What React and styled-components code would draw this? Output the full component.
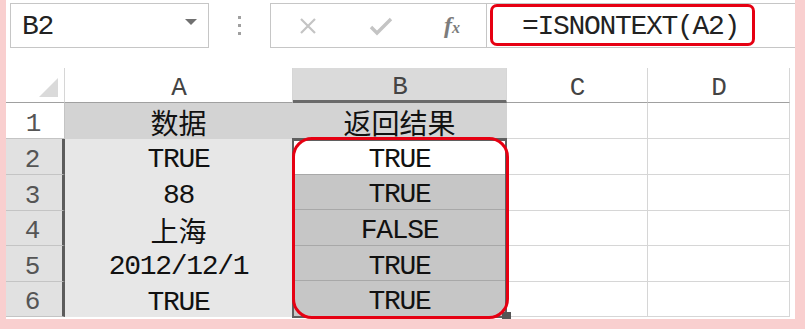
import React from 'react';
import styled, { createGlobalStyle } from 'styled-components';

const GlobalStyle = createGlobalStyle`
  html, body {
    margin: 0;
    padding: 0;
    background: #f9cfcf;
  }
  body {
    font-family: "Liberation Mono", "Noto Sans CJK SC", monospace;
  }
`;

const columns = ['A', 'B', 'C', 'D'];

const rows = [
  { n: 1, a: '数据', b: '返回结果', cjk: true },
  { n: 2, a: 'TRUE', b: 'TRUE' },
  { n: 3, a: '88', b: 'TRUE' },
  { n: 4, a: '上海', b: 'FALSE', cjkA: true },
  { n: 5, a: '2012/12/1', b: 'TRUE' },
  { n: 6, a: 'TRUE', b: 'TRUE' },
];

const App = () => {
  const [title, ...data] = rows;

  return (
    <>
      <GlobalStyle />
      <Window>
        <Toolbar>
          <NameBox>
            <MonoText>B2</MonoText>
            <svg width='12' height='7' viewBox='0 0 12 7'>
              <polygon points='0,0 12,0 6,6' fill='#707070' />
            </svg>
          </NameBox>
          <Grip>
            <Dot />
            <Dot />
            <Dot />
          </Grip>
          <ButtonBox>
            <svg width='18' height='18' viewBox='0 0 18 18'>
              <path d='M2 2 L16 16 M16 2 L2 16' stroke='#c4c4c4' strokeWidth='2.2' />
            </svg>
            <svg width='24' height='20' viewBox='0 0 24 20'>
              <path
                d='M2 11 L8 17 L22 3'
                stroke='#c4c4c4'
                strokeWidth='3.4'
                fill='none'
              />
            </svg>
            <Fx>
              f<small>x</small>
            </Fx>
          </ButtonBox>
          <FormulaBar>
            <Highlight>
              <MonoText>=ISNONTEXT(A2)</MonoText>
            </Highlight>
          </FormulaBar>
        </Toolbar>

        <Sheet>
          <Corner>
            <svg width='19' height='19' viewBox='0 0 19 19'>
              <polygon points='19,0 19,19 0,19' fill='#dadada' />
            </svg>
          </Corner>
          {columns.map((c) => (
            <ColHead key={c} $active={c === 'B'}>
              {c}
            </ColHead>
          ))}

          <RowHead>{title.n}</RowHead>
          <Cell $fill='title'>
            <Cjk>{title.a}</Cjk>
          </Cell>
          <Cell $fill='title'>
            <Cjk>{title.b}</Cjk>
          </Cell>
          <Cell />
          <Cell />

          {/* B2:B6 sits in its own block so the selection frame can wrap it */}
          <Range>
            {data.map((r) => (
              <Cell key={r.n} $fill={r.n === 2 ? 'active' : 'selected'}>
                {r.b}
              </Cell>
            ))}
            <RangeBorder />
            <FillHandle />
            <Ring />
          </Range>

          {data.map((r) => (
            <React.Fragment key={r.n}>
              <RowHead $active>{r.n}</RowHead>
              <Cell $fill='data'>{r.cjkA ? <Cjk>{r.a}</Cjk> : r.a}</Cell>
              <Cell />
              <Cell />
            </React.Fragment>
          ))}
        </Sheet>
      </Window>
    </>
  );
};

export default App;

const Window = styled.div`
  margin: 0 10px 0 6px;
  height: 319px;
  background: #fff;
  box-sizing: border-box;
  padding-top: 3px;
  overflow: hidden;
`;

const Toolbar = styled.div`
  display: flex;
  align-items: stretch;
  height: 45px;
`;

const MonoText = styled.span`
  font-family: "Liberation Mono", monospace;
  font-size: 28px;
  letter-spacing: -1.3px;
  color: #222;
  line-height: 1;
`;

const NameBox = styled.div`
  width: 199px;
  margin-left: 4px;
  box-sizing: border-box;
  border: 1px solid #c6c6c6;
  display: flex;
  align-items: center;
  justify-content: space-between;
  padding: 3px 11px 0 11px;

  svg {
    margin-top: -10px;
  }
`;

const Grip = styled.div`
  width: 61px;
  display: flex;
  flex-direction: column;
  align-items: center;
  justify-content: center;
  gap: 5px;
`;

const Dot = styled.span`
  width: 3px;
  height: 3px;
  background: #a0a0a0;
`;

const ButtonBox = styled.div`
  width: 217px;
  box-sizing: border-box;
  border: 1px solid #c6c6c6;
  display: flex;
  align-items: center;
  padding: 0 26px 0 28px;
  justify-content: space-between;
`;

const Fx = styled.span`
  font-family: "Liberation Serif", serif;
  font-style: italic;
  font-weight: bold;
  font-size: 24px;
  color: #7c7c7c;

  small {
    font-size: 16px;
  }
`;

const FormulaBar = styled.div`
  flex: 1;
  border-top: 1px solid #c6c6c6;
  border-bottom: 1px solid #c6c6c6;
  display: flex;
  align-items: stretch;
  padding-left: 3px;
`;

const Highlight = styled.div`
  width: 265px;
  box-sizing: border-box;
  border: 3px solid #e60012;
  border-radius: 7px;
  margin-bottom: 1px;
  display: flex;
  align-items: center;
  padding: 3px 0 0 29px;
`;

const Sheet = styled.div`
  margin-top: 20px;
  display: grid;
  grid-template-columns: 59px 228px 214px 141px 142px;
  grid-template-rows: 35px 36px 36px 36px 35px 36px 35px;
  font-family: "Liberation Mono", "Noto Sans CJK SC", monospace;
  font-size: 28px;
  line-height: 1;
  letter-spacing: -1.3px;
  color: #111;
`;

const Corner = styled.div`
  box-sizing: border-box;
  border-right: 1px solid #d6d6d6;
  border-bottom: 1px solid #a0a0a0;
  display: flex;
  align-items: flex-end;
  justify-content: flex-end;
  padding: 0 6px 5px 0;
`;

const ColHead = styled.div`
  box-sizing: border-box;
  display: flex;
  align-items: center;
  justify-content: center;
  padding-top: 5px;
  font-size: 26px;
  color: #444;
  background: ${({ $active }) => ($active ? '#dadada' : '#fff')};
  border-right: 1px solid #d6d6d6;
  border-bottom: ${({ $active }) =>
    $active ? '3px solid #6a6a6a' : '1px solid #a0a0a0'};
`;

const RowHead = styled.div`
  box-sizing: border-box;
  display: flex;
  align-items: center;
  justify-content: center;
  padding: 6px 4px 0 0;
  font-size: 26px;
  color: #555;
  background: ${({ $active }) => ($active ? '#e1e1e1' : '#fff')};
  border-bottom: 1px solid #c4c4c4;
  border-right: ${({ $active }) =>
    $active ? '3px solid #5c5c5c' : '1px solid #c4c4c4'};
`;

const fills = {
  title: { bg: '#d3d3d3', line: '#d3d3d3' },
  data: { bg: '#e7e7e7', line: '#e7e7e7' },
  active: { bg: '#fff', line: '#a8a8a8' },
  selected: { bg: '#c6c6c6', line: '#a8a8a8' },
};

const Cell = styled.div`
  box-sizing: border-box;
  flex: 1;
  min-height: 0;
  display: flex;
  align-items: center;
  justify-content: center;
  padding-top: 7px;
  background: ${({ $fill }) => (fills[$fill] ? fills[$fill].bg : '#fff')};
  border-bottom: 1px solid
    ${({ $fill }) => (fills[$fill] ? fills[$fill].line : '#d6d6d6')};
  border-right: 1px solid
    ${({ $fill }) => (fills[$fill] ? fills[$fill].bg : '#d6d6d6')};
`;

const Cjk = styled.span`
  font-family: "Noto Sans CJK SC", sans-serif;
  font-size: 28px;
  letter-spacing: 0;
  line-height: 1;
  margin-top: -4px;
`;

const Range = styled.div`
  grid-column: 3;
  grid-row: 3 / 8;
  position: relative;
  display: flex;
  flex-direction: column;
`;

const RangeBorder = styled.span`
  position: absolute;
  inset: -1px 0 -1px -1px;
  border: 2px solid #5f5f5f;
  border-top-width: 3px;
  pointer-events: none;
`;

const FillHandle = styled.span`
  position: absolute;
  right: -4px;
  bottom: -3px;
  width: 9px;
  height: 8px;
  background: #555;
`;

const Ring = styled.span`
  position: absolute;
  inset: -2px -2px -2px -1px;
  border: 3px solid #e60012;
  border-radius: 20px;
  pointer-events: none;
`;
